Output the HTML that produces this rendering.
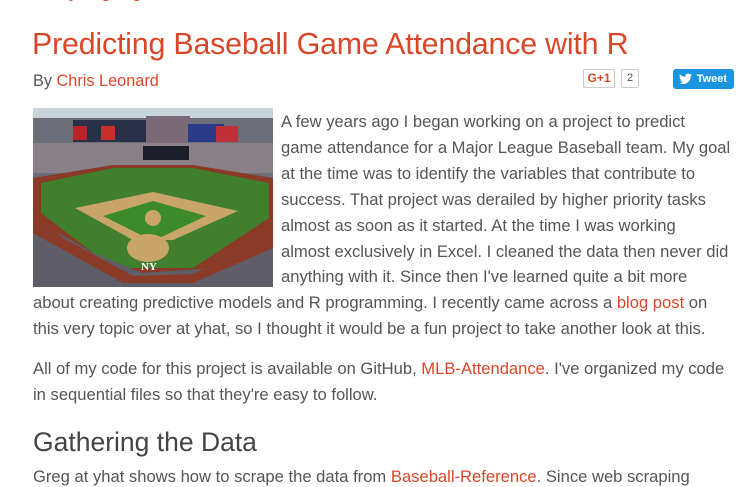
<!DOCTYPE html>
<html><head><meta charset="utf-8"><style>
body{margin:0;background:#fff;width:751px;height:483px;overflow:hidden;position:relative;font-family:"Liberation Sans",sans-serif;color:#555}
.l{position:absolute;white-space:nowrap;font-size:16.6px;line-height:20px}
a{color:#d9472b;text-decoration:none}
</style></head><body>
<div class="l" style="left:33px;top:-19px;color:#d9472b;font-size:18px">Analyzing Big Data with R</div>
<div class="l" style="left:32px;top:26px;font-size:30.4px;line-height:36px;color:#d9472b;letter-spacing:-0.2px">Predicting Baseball Game Attendance with R</div>
<div class="l" style="left:33px;top:71px;font-size:16.3px">By <a>Chris Leonard</a></div>
<div style="position:absolute;left:583px;top:69px;width:32px;height:19px;border:1px solid #ccc;border-radius:2px;box-sizing:border-box;color:#d9472b;font:bold 12px 'Liberation Sans',sans-serif;text-align:center;line-height:17px">G+1</div>
<div style="position:absolute;left:621px;top:69px;width:18px;height:19px;border:1px solid #ccc;border-radius:2px;box-sizing:border-box;font-size:11px;text-align:center;line-height:17px">2</div>
<div style="position:absolute;left:673px;top:69px;width:61px;height:20px;background:#1b95e0;border-radius:3px;color:#fff;font:bold 11px 'Liberation Sans',sans-serif;line-height:20px;text-align:right;padding-right:7px;box-sizing:border-box">Tweet</div>
<svg style="position:absolute;left:679px;top:73px" width="13" height="12" viewBox="0 0 24 20"><path fill="#fff" d="M24 2.4a10 10 0 0 1-2.8.8A5 5 0 0 0 23.3.4a10 10 0 0 1-3.1 1.2A4.9 4.9 0 0 0 11.8 6 14 14 0 0 1 1.7.9a4.9 4.9 0 0 0 1.5 6.6A4.9 4.9 0 0 1 1 6.9a4.9 4.9 0 0 0 3.9 4.8 5 5 0 0 1-2.2.1 4.9 4.9 0 0 0 4.6 3.4A9.9 9.9 0 0 1 0 17.2 14 14 0 0 0 7.5 19.4c9.1 0 14-7.5 14-14v-.6A10 10 0 0 0 24 2.4z"/></svg>
<svg style="position:absolute;left:33px;top:108px" width="240" height="179" viewBox="0 0 240 179">
<rect width="240" height="179" fill="#6b6d78"/>
<rect width="240" height="10" fill="#c9d3da"/>
<rect x="40" y="12" width="80" height="22" fill="#2a3048"/>
<rect x="40" y="18" width="14" height="14" fill="#b8242a"/><rect x="68" y="18" width="14" height="14" fill="#c8302a"/>
<rect x="113" y="8" width="44" height="28" fill="#7a6a78"/>
<rect x="155" y="16" width="36" height="18" fill="#2a3a88"/><rect x="183" y="18" width="22" height="16" fill="#c03038"/>
<rect x="0" y="35" width="240" height="30" fill="#8a8088"/>
<rect x="110" y="38" width="46" height="14" fill="#1c1e2a"/>
<path d="M0 70 L80 57 L160 57 L240 70 L240 179 L0 179Z" fill="#8a3a26"/>
<path d="M8 75 L80 60 L160 60 L236 75 L236 110 L160 160 L80 160 L8 105Z" fill="#3f7f2e"/>
<path d="M42 100 L120 84 L205 103 L140 132 L100 132Z" fill="#c9a56a"/>
<path d="M70 108 L120 93 L173 108 L120 133Z" fill="#3d8a2c"/>
<circle cx="120" cy="110" r="8" fill="#c9a56a"/>
<ellipse cx="115" cy="140" rx="21" ry="14" fill="#c9a56a"/>
<path d="M0 110 L60 145 L110 165 L180 160 L240 135 L240 179 L0 179Z" fill="#5f5e68"/>
<path d="M0 100 L30 130 L100 168 L160 166 L240 125 L240 140 L160 175 L90 175 L0 125Z" fill="#8a3a26"/>
<text x="108" y="162" fill="#fff" font-size="11" font-weight="bold" font-family="Liberation Serif">NY</text>
</svg>
<div class="l" style="left:281px;top:112px">A few years ago I began working on a project to predict</div>
<div class="l" style="left:281px;top:138px">game attendance for a Major League Baseball team. My goal</div>
<div class="l" style="left:281px;top:164px">at the time was to identify the variables that contribute to</div>
<div class="l" style="left:281px;top:190px">success. That project was derailed by higher priority tasks</div>
<div class="l" style="left:281px;top:216px">almost as soon as it started. At the time I was working</div>
<div class="l" style="left:281px;top:242px">almost exclusively in Excel. I cleaned the data then never did</div>
<div class="l" style="left:281px;top:267px">anything with it. Since then I've learned quite a bit more</div>
<div class="l" style="left:33px;top:293px">about creating predictive models and R programming. I recently came across a <a>blog post</a> on</div>
<div class="l" style="left:33px;top:319px">this very topic over at yhat, so I thought it would be a fun project to take another look at this.</div>
<div class="l" style="left:33px;top:359px">All of my code for this project is available on GitHub, <a>MLB-Attendance</a>. I've organized my code</div>
<div class="l" style="left:33px;top:385px">in sequential files so that they're easy to follow.</div>
<div class="l" style="left:33px;top:426px;font-size:26.5px;line-height:32px;color:#444">Gathering the Data</div>
<div class="l" style="left:33px;top:467px">Greg at yhat shows how to scrape the data from <a>Baseball-Reference</a>. Since web scraping</div>
</body></html>
